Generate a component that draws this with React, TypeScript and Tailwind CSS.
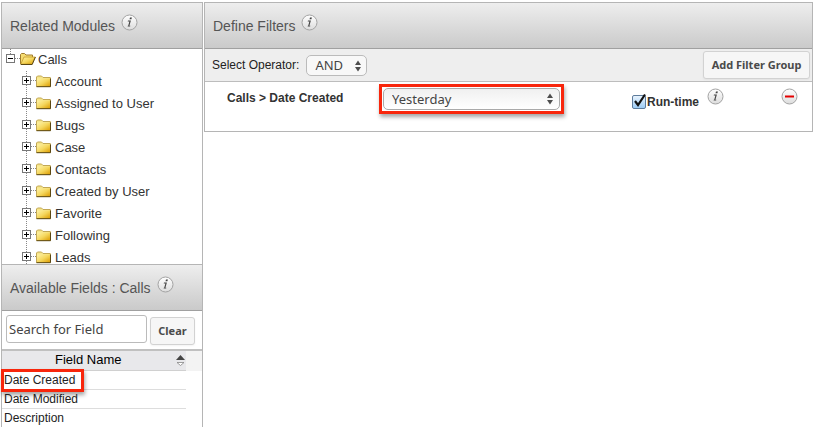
import React, { useState } from 'react';

const modules = [
  'Account',
  'Assigned to User',
  'Bugs',
  'Case',
  'Contacts',
  'Created by User',
  'Favorite',
  'Following',
  'Leads',
];

const fields = ['Date Created', 'Date Modified', 'Description'];

const IconDefs: React.FC = () => (
  <svg width="0" height="0" className="absolute" aria-hidden="true">
    <defs>
      <linearGradient id="folderFill" x1="0" y1="0" x2="1" y2="1">
        <stop offset="0" stopColor="#fff3a6" />
        <stop offset="0.5" stopColor="#f5d75e" />
        <stop offset="1" stopColor="#dc9c00" />
      </linearGradient>
      <linearGradient id="roundFill" x1="0" y1="0" x2="0" y2="1">
        <stop offset="0" stopColor="#ffffff" />
        <stop offset="1" stopColor="#dcdcdc" />
      </linearGradient>
    </defs>
  </svg>
);

const InfoButton: React.FC<{ label: string }> = ({ label }) => (
  <button type="button" aria-label={label} className="shrink-0">
    <svg width="17" height="17" viewBox="0 0 17 17" className="block">
      <circle cx="8.5" cy="8.5" r="7.5" fill="url(#roundFill)" stroke="#a3a3a3" />
      <path d="M9 3.4h1.9l-.5 1.9H8.5zM7 6.5h2.9l-1.5 5.2h1l-.3.9H6.6l.3-.9h.3l1.2-4.3H6.7z" fill="#444" />
    </svg>
  </button>
);

const SelectArrows: React.FC<{ className: string }> = ({ className }) => (
  <svg width="6" height="12" viewBox="0 0 6 12" className={`pointer-events-none absolute ${className}`}>
    <path d="M0 5L3 0.5L6 5zM0 7L3 11.5L6 7z" fill="#4d4d4d" />
  </svg>
);

const PanelHeader: React.FC<{ title: string }> = ({ title }) => (
  <div className="flex h-[46px] items-start gap-1.5 border-b border-[#a0a0a0] bg-linear-to-b from-[#eeeeee] to-[#cacaca] px-2 pt-[11px]">
    <h2 className="mt-0.5 text-sm leading-5 text-[#555]">{title}</h2>
    <InfoButton label={`About ${title}`} />
  </div>
);

const ClosedNode: React.FC = () => (
  <svg width="34" height="22" viewBox="0 0 34 22" className="block shrink-0" shapeRendering="crispEdges">
    <path d="M7.5 0v22M12 9.5h5" stroke="#888" strokeDasharray="1 1" fill="none" />
    <rect x="3.5" y="5.5" width="8" height="8" fill="#fff" stroke="#777" />
    <path d="M5 9.5h5M7.5 7v5" stroke="#000" />
    <g shapeRendering="auto">
      <path d="M17.5 15.5V6L18.5 5H22.5L24 6.5H31.3V15.5z" fill="#f6e58a" stroke="#c2a753" />
      <path d="M18 7.5H31V15.5H18z" fill="url(#folderFill)" />
      <path d="M17.5 15.7H31.5V7.5" stroke="#5c4812" fill="none" />
    </g>
  </svg>
);

const OpenNode: React.FC = () => (
  <svg width="34" height="22" viewBox="0 0 34 22" className="block shrink-0" shapeRendering="crispEdges">
    <path d="M7.5 0v6M7.5 14v8M12 9.5h5" stroke="#888" strokeDasharray="1 1" fill="none" className="[clip-path:inset(0_0_8px_0)]" />
    <rect x="3.5" y="5.5" width="8" height="8" fill="#fff" stroke="#777" />
    <path d="M5 9.5h5" stroke="#000" />
    <g shapeRendering="auto">
      <path d="M17.5 15V5.5L18.5 4.5H21.5L23 6H29.5V8.5" fill="#f5dc72" stroke="#a07c2e" />
      <path d="M17.8 15.2L21 8H32.3L29 15.2z" fill="url(#folderFill)" stroke="#c49a28" strokeWidth="0.8" />
      <path d="M17.8 15.5H29.2L32.4 8" fill="none" stroke="#5c4812" />
    </g>
  </svg>
);

const ModuleTree: React.FC = () => (
  <ul className="h-[215px] overflow-hidden text-[13px] leading-[22px] text-[#333]">
    <li>
      <button type="button" className="flex pl-px">
        <OpenNode />
        <span className="pl-px">Calls</span>
      </button>
      <ul className="pl-4">
        {modules.map((name) => (
          <li key={name}>
            <button type="button" className="flex pl-px">
              <ClosedNode />
              <span className="pl-0.5">{name}</span>
            </button>
          </li>
        ))}
      </ul>
    </li>
  </ul>
);

const App: React.FC = () => {
  const [search, setSearch] = useState('');
  const [operator, setOperator] = useState('AND');
  const [period, setPeriod] = useState('Yesterday');
  const [runtime, setRuntime] = useState(true);

  return (
    <div className="flex min-h-screen gap-px bg-white pt-0.5 pr-0.5 pl-px font-['Liberation_Sans',Arial,sans-serif]">
      <IconDefs />
      <aside className="w-[202px] shrink-0 border border-b-0 border-[#b5b5b5]">
        <PanelHeader title="Related Modules" />
        <ModuleTree />
        <div className="border-t border-[#b5b5b5]">
          <PanelHeader title="Available Fields : Calls" />
        </div>
        <div className="flex gap-[3px] border-b-2 border-[#c0c0c0] p-1">
          <input
            type="text"
            aria-label="Search for Field"
            placeholder="Search for Field"
            value={search}
            onChange={(e) => setSearch(e.target.value)}
            className="h-7 w-[141px] rounded-[3px] border border-[#bbb] px-0.5 font-['Noto_Sans',sans-serif] text-[13px] text-[#444] placeholder:text-[#444]"
          />
          <button
            type="button"
            onClick={() => setSearch('')}
            className="mt-0.5 h-7 w-[45px] rounded-[3px] border border-[#d2d2d2] bg-[#f6f6f6] font-['Noto_Sans',sans-serif] text-[11px] font-bold text-[#4a4a4a] shadow-xs"
          >
            Clear
          </button>
        </div>
        <div className="bg-linear-to-b from-[#f3f3f3] from-[20px] to-white to-[20px]">
          <table className="w-[184px] border-collapse text-left text-xs text-[#222]">
            <thead>
              <tr>
                <th className="h-[19px] border-b border-[#d0d0d0] bg-[#e8e8eb] p-0 font-normal text-black">
                  <button type="button" className="flex w-full items-center justify-between pr-px pl-[53px] text-[13px] leading-[18px]">
                    Field Name
                    <svg width="9" height="11" viewBox="0 0 9 11">
                      <path d="M0 5L4.5 0L9 5z" fill="#444" />
                      <path d="M1 7.5H8L4.5 10.5z" fill="#fff" stroke="#888" strokeWidth="0.8" />
                    </svg>
                  </button>
                </th>
              </tr>
            </thead>
            <tbody>
              {fields.map((field) => (
                <tr key={field}>
                  <td className="relative h-[19px] border-b border-[#ddd] p-0 pl-0.5 leading-[18px]">
                    {field}
                    {field === 'Date Created' && (
                      <span className="pointer-events-none absolute -top-0.5 -left-px h-[23px] w-[83px] border-3 border-[#f8260c] shadow-[1px_3px_4px_rgba(0,0,0,0.35)]" />
                    )}
                  </td>
                </tr>
              ))}
            </tbody>
          </table>
        </div>
      </aside>

      <main className="min-w-0 flex-1 self-start border border-[#b5b5b5]">
        <PanelHeader title="Define Filters" />
        <div className="flex h-[33px] items-center border-b border-[#bdbdbd] bg-[#eeeeee] pr-0.5 pl-[7px]">
          <label htmlFor="operator" className="text-xs text-[#222]">
            Select Operator:
          </label>
          <div className="relative ml-[7px]">
            <select
              id="operator"
              value={operator}
              onChange={(e) => setOperator(e.target.value)}
              className="block h-[21px] w-[61px] appearance-none rounded-[5px] border border-[#bbb] bg-[#f8f8f8] pl-2 font-['Noto_Sans',sans-serif] text-[13px] leading-[18px] text-[#444]"
            >
              <option>AND</option>
              <option>OR</option>
            </select>
            <SelectArrows className="top-[5px] right-1.5" />
          </div>
          <button
            type="button"
            className="ml-auto h-7 w-[107px] rounded-[3px] border border-[#d2d2d2] bg-[#f6f6f6] font-['Noto_Sans',sans-serif] text-[11px] font-bold whitespace-nowrap text-[#4a4a4a] shadow-xs"
          >
            Add Filter Group
          </button>
        </div>

        <div className="flex h-[49px] items-start pt-0.5 pr-3.5 pl-[22px] text-xs text-[#333]">
          <label htmlFor="period" className="mt-1.5 w-[152px] shrink-0 font-bold">
            Calls &gt; Date Created
          </label>
          <div className="relative shrink-0 border-3 border-[#f8260c] p-px shadow-[1px_3px_4px_rgba(0,0,0,0.35)]">
            <select
              id="period"
              value={period}
              onChange={(e) => setPeriod(e.target.value)}
              className="block h-[22px] w-[177px] appearance-none rounded-[5px] border border-[#aaa] bg-linear-to-b from-[#f0f0f0] to-white pl-2 font-['Noto_Sans',sans-serif] text-[13px] leading-[18px] text-[#444]"
            >
              <option>Yesterday</option>
              <option>Today</option>
            </select>
            <SelectArrows className="top-1.5 right-2" />
          </div>
          <label className="mt-2.5 ml-auto flex items-center gap-px font-bold">
            <span className="relative block">
              <input
                type="checkbox"
                checked={runtime}
                onChange={(e) => setRuntime(e.target.checked)}
                className="block size-3.5 appearance-none rounded-xs border border-[#5e7c9c] bg-linear-to-b from-[#e8f3fd] to-[#9dccf5]"
              />
              {runtime && (
                <svg width="14" height="16" viewBox="0 0 14 16" className="pointer-events-none absolute -top-0.5 left-0">
                  <path d="M3 8L6 12L13 1.5" fill="none" stroke="#111" strokeWidth="2.2" />
                </svg>
              )}
            </span>
            Run-time
          </label>
          <div className="mt-1 ml-2 flex w-[91px] justify-between">
            <InfoButton label="About run-time filters" />
            <button type="button" aria-label="Remove filter">
              <svg width="17" height="17" viewBox="0 0 17 17" className="block">
                <circle cx="8.5" cy="8.5" r="7.5" fill="url(#roundFill)" stroke="#a3a3a3" />
                <path d="M4 7.5h9v2H4z" fill="#e40000" />
              </svg>
            </button>
          </div>
        </div>
      </main>
    </div>
  );
};

export default App;
